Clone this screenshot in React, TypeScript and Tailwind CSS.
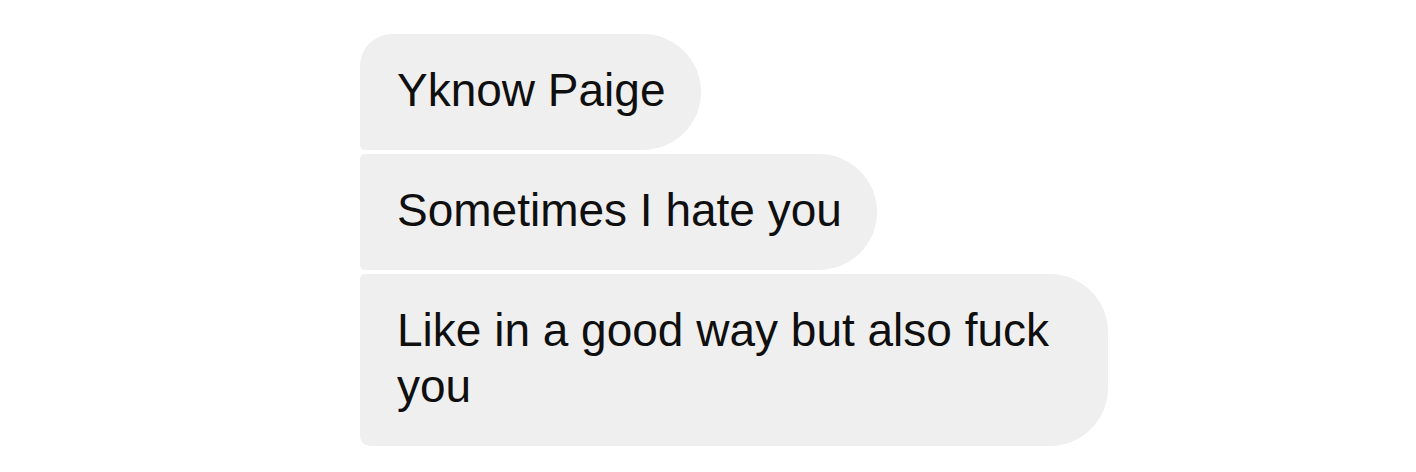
import React from "react";

const messages = [
  { id: 1, text: "Yknow Paige", shape: "rounded-tl-[32px] rounded-bl-[5px] rounded-r-[58px]" },
  { id: 2, text: "Sometimes I hate you", shape: "rounded-l-[5px] rounded-r-[58px]" },
  { id: 3, text: "Like in a good way but also fuck you", shape: "rounded-tl-[5px] rounded-bl-[10px] rounded-r-[58px]" },
];

const Bubble = ({ text, shape }: { text: string; shape: string }) => (
  <div
    className={`max-w-[748px] bg-[#efefef] pl-[37px] pr-[35px] pt-[28px] pb-[32px] text-[46px] leading-[56px] text-[#0f0f0f] ${shape}`}
  >
    {text}
  </div>
);

export default function App() {
  return (
    <div
      className="w-[1416px] h-[472px] bg-white pl-[360px] pt-[34px] flex flex-col items-start gap-[4px]"
      style={{ fontFamily: '"Liberation Sans", Arial, sans-serif' }}
    >
      {messages.map((m) => (
        <Bubble key={m.id} text={m.text} shape={m.shape} />
      ))}
    </div>
  );
}
